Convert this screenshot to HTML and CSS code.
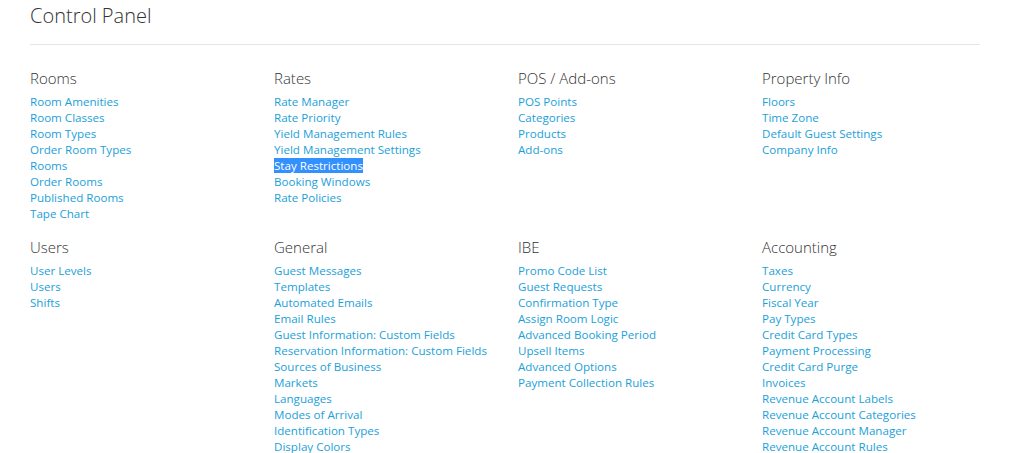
FILE: index.html
```html
<!DOCTYPE html>
<html>
<head>
<meta charset="utf-8">
<link rel="stylesheet" href="styles.css">
</head>
<body>
<div class="page">
  <h1 class="title">Control Panel</h1>
  <hr class="rule">
  <div class="grid">
    <section class="group">
      <h2 class="group-title">Rooms</h2>
      <ul class="links">
        <li><a href="#">Room Amenities</a></li>
        <li><a href="#">Room Classes</a></li>
        <li><a href="#">Room Types</a></li>
        <li><a href="#">Order Room Types</a></li>
        <li><a href="#">Rooms</a></li>
        <li><a href="#">Order Rooms</a></li>
        <li><a href="#">Published Rooms</a></li>
        <li><a href="#">Tape Chart</a></li>
      </ul>
    </section>
    <section class="group">
      <h2 class="group-title">Rates</h2>
      <ul class="links">
        <li><a href="#">Rate Manager</a></li>
        <li><a href="#">Rate Priority</a></li>
        <li><a href="#">Yield Management Rules</a></li>
        <li><a href="#">Yield Management Settings</a></li>
        <li><a href="#" class="selected">Stay Restrictions</a></li>
        <li><a href="#">Booking Windows</a></li>
        <li><a href="#">Rate Policies</a></li>
      </ul>
    </section>
    <section class="group">
      <h2 class="group-title">POS / Add-ons</h2>
      <ul class="links">
        <li><a href="#">POS Points</a></li>
        <li><a href="#">Categories</a></li>
        <li><a href="#">Products</a></li>
        <li><a href="#">Add-ons</a></li>
      </ul>
    </section>
    <section class="group">
      <h2 class="group-title">Property Info</h2>
      <ul class="links">
        <li><a href="#">Floors</a></li>
        <li><a href="#">Time Zone</a></li>
        <li><a href="#">Default Guest Settings</a></li>
        <li><a href="#">Company Info</a></li>
      </ul>
    </section>
    <section class="group">
      <h2 class="group-title">Users</h2>
      <ul class="links">
        <li><a href="#">User Levels</a></li>
        <li><a href="#">Users</a></li>
        <li><a href="#">Shifts</a></li>
      </ul>
    </section>
    <section class="group">
      <h2 class="group-title">General</h2>
      <ul class="links">
        <li><a href="#">Guest Messages</a></li>
        <li><a href="#">Templates</a></li>
        <li><a href="#">Automated Emails</a></li>
        <li><a href="#">Email Rules</a></li>
        <li><a href="#">Guest Information: Custom Fields</a></li>
        <li><a href="#">Reservation Information: Custom Fields</a></li>
        <li><a href="#">Sources of Business</a></li>
        <li><a href="#">Markets</a></li>
        <li><a href="#">Languages</a></li>
        <li><a href="#">Modes of Arrival</a></li>
        <li><a href="#">Identification Types</a></li>
        <li><a href="#">Display Colors</a></li>
      </ul>
    </section>
    <section class="group">
      <h2 class="group-title">IBE</h2>
      <ul class="links">
        <li><a href="#">Promo Code List</a></li>
        <li><a href="#">Guest Requests</a></li>
        <li><a href="#">Confirmation Type</a></li>
        <li><a href="#">Assign Room Logic</a></li>
        <li><a href="#">Advanced Booking Period</a></li>
        <li><a href="#">Upsell Items</a></li>
        <li><a href="#">Advanced Options</a></li>
        <li><a href="#">Payment Collection Rules</a></li>
      </ul>
    </section>
    <section class="group">
      <h2 class="group-title">Accounting</h2>
      <ul class="links">
        <li><a href="#">Taxes</a></li>
        <li><a href="#">Currency</a></li>
        <li><a href="#">Fiscal Year</a></li>
        <li><a href="#">Pay Types</a></li>
        <li><a href="#">Credit Card Types</a></li>
        <li><a href="#">Payment Processing</a></li>
        <li><a href="#">Credit Card Purge</a></li>
        <li><a href="#">Invoices</a></li>
        <li><a href="#">Revenue Account Labels</a></li>
        <li><a href="#">Revenue Account Categories</a></li>
        <li><a href="#">Revenue Account Manager</a></li>
        <li><a href="#">Revenue Account Rules</a></li>
      </ul>
    </section>
  </div>
</div>
</body>
</html>
```
FILE: styles.css
```css
html, body {
  margin: 0;
  padding: 0;
  background: #ffffff;
}
body {
  font-family: "Open Sans", "Liberation Sans", sans-serif;
  color: #333333;
  overflow: hidden;
}
.page {
  width: 950px;
  padding: 2px 0 0 30px;
}
.title {
  margin: 0;
  font-size: 20px;
  line-height: 28px;
  font-weight: 300;
  color: #333333;
}
.rule {
  margin: 14px 0 0 0;
  border: 0;
  height: 1px;
  background: #e6e6e6;
}
.grid {
  display: grid;
  grid-template-columns: repeat(4, 244px);
  row-gap: 14px;
  margin-top: 22px;
}
.group-title {
  margin: 0 0 5px 0;
  font-size: 15px;
  line-height: 22px;
  font-weight: 300;
  color: #333333;
}
.links {
  list-style: none;
  margin: 0;
  padding: 0;
}
.links li {
  font-size: 11.6px;
  line-height: 16px;
}
.links a {
  color: #1ba1d9;
  text-decoration: none;
}
.links a.selected {
  background: #3390ff;
  color: #ffffff;
}
```
